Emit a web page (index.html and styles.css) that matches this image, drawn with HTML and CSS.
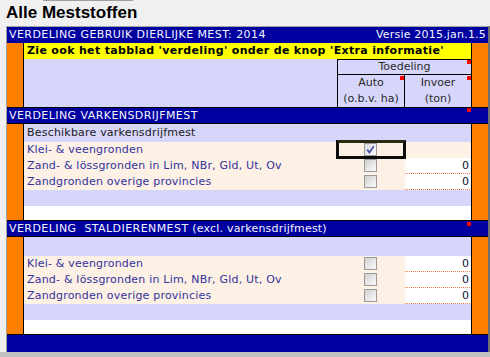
FILE: index.html
```html
<!DOCTYPE html>
<html>
<head>
<meta charset="utf-8">
<link rel="stylesheet" href="styles.css">
</head>
<body>
<div class="topline"></div>
<h1 class="title">Alle Meststoffen</h1>
<div class="sheet">
  <div class="band hdr"><span class="caps">VERDELING GEBRUIK DIERLIJKE MEST: 2014</span><span class="mixed">Versie 2015.jan.1.5</span></div>
  <div class="seg">
    <div class="pane">
      <div class="yellow">Zie ook het tabblad 'verdeling' onder de knop 'Extra informatie'</div>
      <div class="toed-row"><div class="toed">Toedeling<span class="mark m0"></span></div></div>
      <div class="head-row">
        <div class="hcell auto">Auto<br>(o.b.v. ha)<span class="mark m1"></span></div>
        <div class="hcell">Invoer<br>(ton)<span class="mark m1"></span></div>
      </div>
    </div>
  </div>
  <div class="band mid"><span class="caps">VERDELING VARKENSDRIJFMEST</span><span class="mark mb"></span></div>
  <div class="seg">
    <div class="pane">
      <div class="sub">Beschikbare varkensdrijfmest</div>
      <div class="drow">
        <div class="lbl">Klei- &amp; veengronden</div>
        <div class="chk-cell"><span class="cb checked"><svg width="11" height="11" viewBox="0 0 11 11"><path d="M2.2 5.6 L4.4 8.4 L8.8 2.2" fill="none" stroke="#4554a6" stroke-width="1.8"/></svg></span><span class="focus"></span></div>
        <div class="empty"></div>
      </div>
      <div class="drow">
        <div class="lbl">Zand- &amp; lössgronden in Lim, NBr, Gld, Ut, Ov</div>
        <div class="chk-cell"><span class="cb"></span></div>
        <div class="inp">0</div>
      </div>
      <div class="drow">
        <div class="lbl">Zandgronden overige provincies</div>
        <div class="chk-cell"><span class="cb"></span></div>
        <div class="inp">0</div>
      </div>
      <div class="lav"></div>
      <div class="white"></div>
    </div>
  </div>
  <div class="band mid"><span class="caps">VERDELING  STALDIERENMEST</span><span class="mixed"> (excl. varkensdrijfmest)</span><span class="mark mb2"></span></div>
  <div class="seg">
    <div class="pane">
      <div class="sub tall"></div>
      <div class="drow">
        <div class="lbl">Klei- &amp; veengronden</div>
        <div class="chk-cell"><span class="cb"></span></div>
        <div class="inp">0</div>
      </div>
      <div class="drow">
        <div class="lbl">Zand- &amp; lössgronden in Lim, NBr, Gld, Ut, Ov</div>
        <div class="chk-cell"><span class="cb"></span></div>
        <div class="inp">0</div>
      </div>
      <div class="drow">
        <div class="lbl">Zandgronden overige provincies</div>
        <div class="chk-cell"><span class="cb"></span></div>
        <div class="inp">0</div>
      </div>
      <div class="lav"></div>
      <div class="white"></div>
    </div>
  </div>
  <div class="band last"></div>
</div>
<div class="foot"></div>
</body>
</html>
```
FILE: styles.css
```css
* { box-sizing: border-box; }
html, body { margin: 0; padding: 0; }
body {
  width: 490px;
  height: 357px;
  overflow: hidden;
  background: #f0f0f0;
  font-family: "DejaVu Sans", Verdana, sans-serif;
  font-size: 11px;
}
.topline { margin-left: 43px; width: 90px; height: 1px; background: #a0a0a0; }
.title {
  margin: 0;
  height: 25px;
  padding: 2px 0 0 6px;
  font: bold 17px/19px "Liberation Sans", Arial, sans-serif;
  color: #000;
}
.sheet {
  margin-left: 6px;
  width: 484px;
  border-top: 1px solid #a0a0a0;
  border-left: 1px solid #a0a0a0;
  border-right: 2px solid #707070;
}
.band {
  position: relative;
  display: flex;
  justify-content: space-between;
  background: #0000a0;
  color: #f4f4ff;
  height: 16px;
  line-height: 16px;
  padding: 0 2px;
  white-space: pre;
}
.band.mid {
  justify-content: flex-start;
  height: 17px;
  line-height: 15px;
  border-top: 1px solid #000;
  border-bottom: 1px solid #000;
}
.band.last { height: 18px; border-top: 1px solid #000; }
.caps { letter-spacing: 0.43px; }
.mixed { letter-spacing: 0.2px; }
.seg { background: #ff8000; padding: 0 16px; }
.pane {
  border-left: 1px solid #000;
  border-right: 1px solid #000;
  background: #d6d6fa;
}
.yellow {
  height: 16px;
  line-height: 16px;
  background: #ffff00;
  color: #000;
  font-weight: bold;
  padding-left: 3px;
  letter-spacing: 0.33px;
  white-space: nowrap;
}
.toed-row { padding-left: 313px; }
.toed {
  position: relative;
  height: 16px;
  line-height: 14px;
  border-top: 1px solid #000;
  border-bottom: 1px solid #000;
  border-left: 1px solid #000;
  text-align: center;
  color: #2a2a2a;
}
.head-row { display: flex; padding-left: 313px; }
.hcell {
  position: relative;
  width: 66px;
  height: 32px;
  line-height: 16px;
  text-align: center;
  color: #2a2a2a;
}
.hcell.auto { width: 68px; border-left: 1px solid #000; border-right: 1px solid #000; }
.mark { position: absolute; right: 0; width: 4px; height: 4px; background: #ff0000; }
.m0 { top: 0; }
.m1 { top: 1px; }
.mb { top: 0; right: 17px; }
.mb2 { top: 1px; right: 17px; }
.sub {
  height: 18px;
  line-height: 18px;
  padding-left: 3px;
  color: #202020;
  letter-spacing: 0.2px;
}
.sub.tall { height: 19px; }
.drow {
  display: grid;
  grid-template-columns: 313px 68px 66px;
  height: 16px;
  line-height: 16px;
  background: #fdf0e4;
}
.lbl { padding-left: 3px; color: #33339c; letter-spacing: 0.2px; white-space: nowrap; }
.chk-cell { position: relative; padding: 1px 0 0 27px; }
.cb {
  display: block;
  width: 13px;
  height: 13px;
  border: 1px solid #9a9a9a;
  background: linear-gradient(135deg, #cfcfcf 0%, #e6e6e6 50%, #fbfbfb 100%);
}
.cb.checked { background: linear-gradient(135deg, #d8d8dc 0%, #ececf0 50%, #fcfcfc 100%); }
.cb svg { display: block; }
.focus {
  position: absolute;
  left: -1px;
  top: -2px;
  width: 70px;
  height: 19px;
  border: 3px solid #0c0c0c;
  border-top-color: #2a2a12;
}
.inp {
  margin-right: 1px;
  background: #fff;
  border-bottom: 1px dotted #f07848;
  text-align: right;
  padding-right: 1px;
  line-height: 15px;
  color: #101030;
}
.lav { height: 16px; }
.white { height: 14px; background: #fff; }
.foot { height: 5px; background: #c0c0c0; }
```
